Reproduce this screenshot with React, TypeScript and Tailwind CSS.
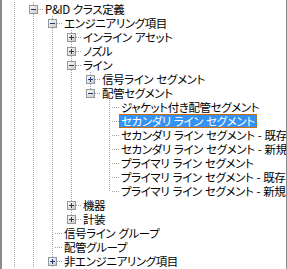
import React from 'react';

type Conn = 'tee' | 'elbow';
type Exp = 'plus' | 'minus' | null;

interface TreeRow {
  guides: boolean[]; // one entry per ancestor column: true = line continues
  conn: Conn;
  exp: Exp;
  label: string;
  selected?: boolean;
}

const rows: TreeRow[] = [
  { guides: [true], conn: 'tee', exp: 'minus', label: 'P&ID クラス定義' },
  { guides: [true, true], conn: 'tee', exp: 'minus', label: 'エンジニアリング項目' },
  { guides: [true, true, true], conn: 'tee', exp: 'plus', label: 'インライン アセット' },
  { guides: [true, true, true], conn: 'tee', exp: 'plus', label: 'ノズル' },
  { guides: [true, true, true], conn: 'tee', exp: 'minus', label: 'ライン' },
  { guides: [true, true, true, true], conn: 'tee', exp: 'plus', label: '信号ライン セグメント' },
  { guides: [true, true, true, true], conn: 'elbow', exp: 'minus', label: '配管セグメント' },
  { guides: [true, true, true, true, false], conn: 'tee', exp: null, label: 'ジャケット付き配管セグメント' },
  { guides: [true, true, true, true, false], conn: 'tee', exp: null, label: 'セカンダリ ライン セグメント', selected: true },
  { guides: [true, true, true, true, false], conn: 'tee', exp: null, label: 'セカンダリ ライン セグメント - 既存' },
  { guides: [true, true, true, true, false], conn: 'tee', exp: null, label: 'セカンダリ ライン セグメント - 新規' },
  { guides: [true, true, true, true, false], conn: 'tee', exp: null, label: 'プライマリ ライン セグメント' },
  { guides: [true, true, true, true, false], conn: 'tee', exp: null, label: 'プライマリ ライン セグメント - 既存' },
  { guides: [true, true, true, true, false], conn: 'elbow', exp: null, label: 'プライマリ ライン セグメント - 新規' },
  { guides: [true, true, true], conn: 'tee', exp: 'plus', label: '機器' },
  { guides: [true, true, true], conn: 'elbow', exp: 'plus', label: '計装' },
  { guides: [true, true], conn: 'tee', exp: null, label: '信号ライン グループ' },
  { guides: [true, true], conn: 'tee', exp: null, label: '配管グループ' },
  { guides: [true, true], conn: 'tee', exp: 'plus', label: '非エンジニアリング項目' },
];

const DOT = '#a3a3a3';
const C = 9; // centre of a 19px cell

// vertical dots on even y between y0 and y1 (exclusive)
const vDots = (y0: number, y1: number) => {
  const out: React.ReactNode[] = [];
  for (let y = y0; y < y1; y++) {
    if (y % 2 === 0) out.push(<rect key={'v' + y} x={C} y={y} width={1} height={1} fill={DOT} />);
  }
  return out;
};

const hDots = (x0: number, x1: number) => {
  const out: React.ReactNode[] = [];
  for (let x = x0; x < x1; x++) {
    if (x % 2 === 0) out.push(<rect key={'h' + x} x={x} y={7} width={1} height={1} fill={DOT} />);
  }
  return out;
};

const GuideCell = ({ on }: { on: boolean }) => (
  <svg width={19} height={14} className="block shrink-0">
    {on && vDots(0, 14)}
  </svg>
);

const ConnCell = ({ conn, exp }: { conn: Conn; exp: Exp }) => (
  <svg width={19} height={14} className="block shrink-0">
    <defs>
      <linearGradient id="btn" x1="0" y1="0" x2="1" y2="1">
        <stop offset="0" stopColor="#ffffff" />
        <stop offset="1" stopColor="#c9c6bd" />
      </linearGradient>
    </defs>
    {exp ? (
      <>
        {vDots(0, 3)}
        {conn === 'tee' && vDots(12, 14)}
        {hDots(14, 19)}
        <rect x={5.5} y={3.5} width={8} height={8} fill="url(#btn)" stroke="#8f9a9c" />
        <rect x={7} y={7} width={5} height={1} fill="#22387a" />
        {exp === 'plus' && <rect x={9} y={5} width={1} height={5} fill="#22387a" />}
      </>
    ) : (
      <>
        {vDots(0, conn === 'tee' ? 14 : 8)}
        {hDots(11, 19)}
      </>
    )}
  </svg>
);

const Row = ({ row }: { row: TreeRow }) => (
  <div className="flex h-[14px] items-center">
    {row.guides.map((g, i) => (
      <GuideCell key={i} on={g} />
    ))}
    <ConnCell conn={row.conn} exp={row.exp} />
    <span
      className={
        'whitespace-nowrap px-px h-[14px] leading-[12px] text-[11.5px] font-normal tracking-[-0.4px] [word-spacing:1px] [font-feature-settings:"palt"] ' +
        (row.selected
          ? 'bg-[#3592f5] text-white border border-dotted border-[#cc6600]'
          : 'text-black border border-transparent')
      }
    >
      {row.label}
    </span>
  </div>
);

export default function App() {
  return (
    <div
      className="flex w-[287px] h-[269px] overflow-hidden bg-white"
      style={{ fontFamily: '"Noto Sans CJK JP", "Noto Sans", sans-serif' }}
    >
      <div className="w-[2px] shrink-0 bg-[#8c8c8c]" />
      <div className="flex-1 flex flex-col pt-[2px] pl-[3px] min-w-0">
        {rows.map((r, i) => (
          <Row key={i} row={r} />
        ))}
      </div>
      <div className="w-px shrink-0 bg-[#8c8c8c]" />
    </div>
  );
}
